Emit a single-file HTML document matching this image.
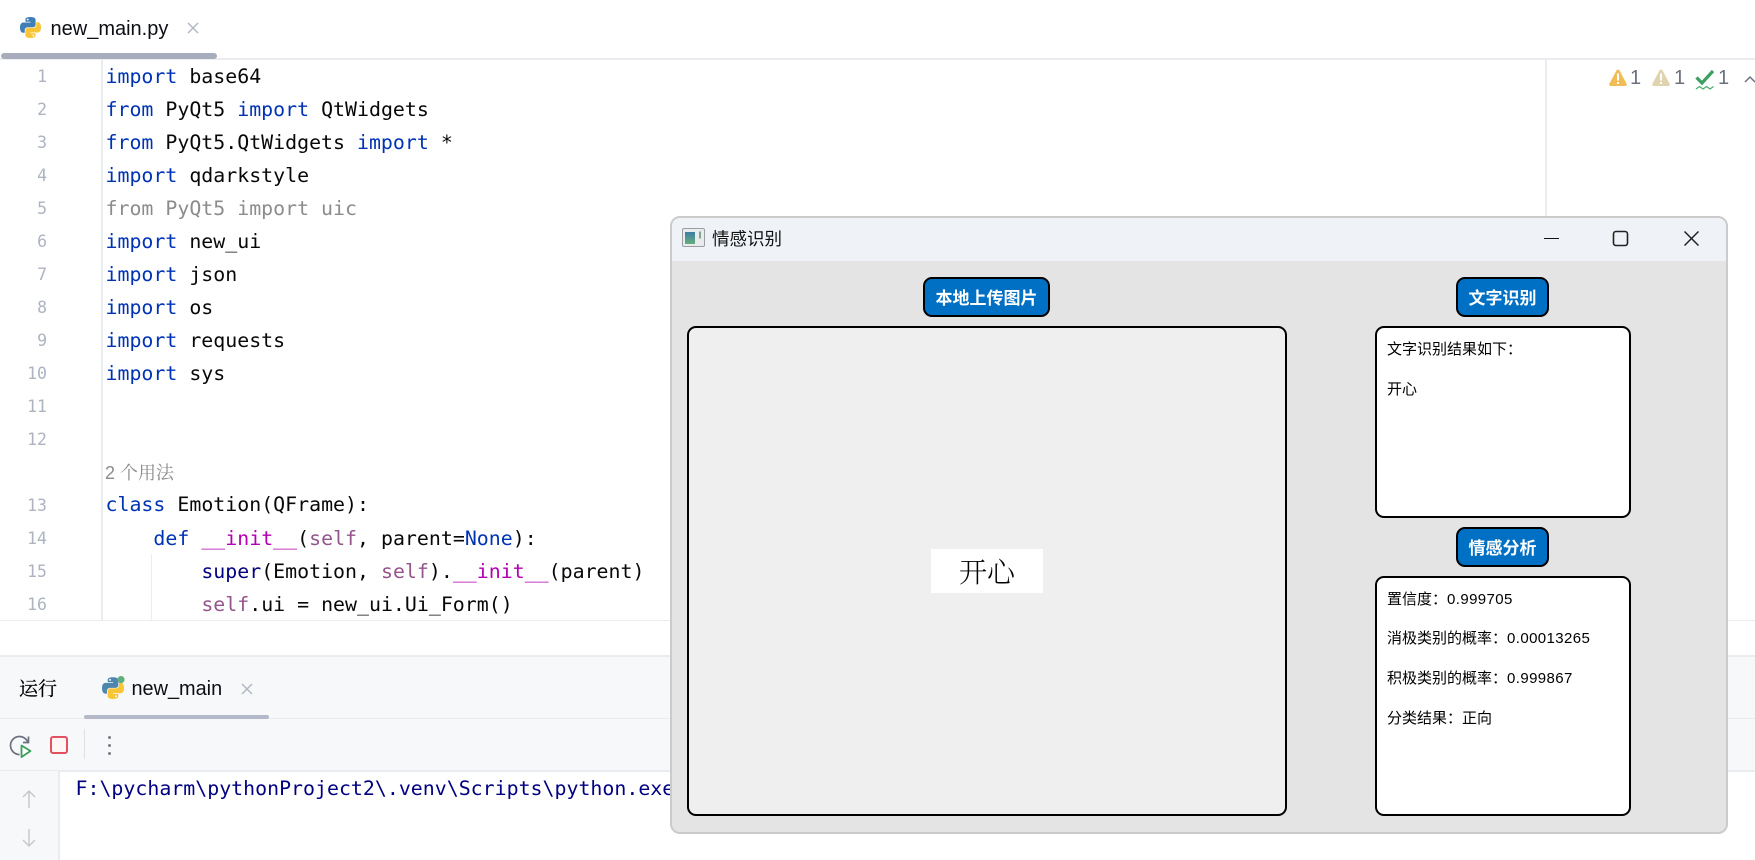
<!DOCTYPE html>
<html lang="zh">
<head>
<meta charset="utf-8">
<title>new_main.py</title>
<style>
html,body{margin:0;padding:0;background:#fff}
body{position:relative;width:1755px;height:860px;overflow:hidden;font-family:"Liberation Sans","Noto Sans CJK SC",sans-serif;color:#111}
.a{position:absolute}
#editor{position:absolute;left:0;top:60px;width:1755px;height:560px;overflow:hidden;background:#fff}
.l{position:absolute;left:105.5px;height:33px;line-height:33px;white-space:pre;font-family:"DejaVu Sans Mono","Liberation Mono",monospace;font-size:19.9px;color:#080808}
.n{position:absolute;left:0;width:47px;text-align:right;height:33px;line-height:33px;font-family:"DejaVu Sans Mono","Liberation Mono",monospace;font-size:16.5px;color:#aeb3c2}
.k{color:#0033b3}.s{color:#94558d}.d{color:#b200b2}.g{color:#8c8c8c}.b{color:#000080}
.btn{position:absolute;box-sizing:border-box;height:40px;top:277px;background:#0070c4;border:2px solid #000;border-radius:9px;color:#fff;font-weight:700;font-size:17px;text-align:center;line-height:36px;font-family:"Noto Sans CJK SC",sans-serif}
.box{position:absolute;box-sizing:border-box;background:#fff;border:2px solid #000;border-radius:9px}
.t{position:absolute;left:1387px;height:24px;line-height:24px;font-size:15px;white-space:pre;color:#000;font-family:"Liberation Sans","Noto Sans CJK SC",sans-serif}
</style>
</head>
<body>

<!-- top tab -->
<svg class="a" style="left:20px;top:17px" width="21" height="21" viewBox="0 0 110 110">
<path fill="#3f7fb5" d="M54.9 0C26.8 0 28.6 12.2 28.6 12.2l0 12.6h26.8v3.8H17.9S0 26.6 0 54.9s15.6 27.3 15.6 27.3h9.3V69s-.5-15.6 15.4-15.6h26.5s14.9.2 14.9-14.4V14.9S84 0 54.9 0zM40.2 8.5a4.8 4.8 0 1 1 0 9.6 4.8 4.8 0 0 1 0-9.6z"/>
<path fill="#f8c537" transform="rotate(180 55 55)" d="M54.9 0C26.8 0 28.6 12.2 28.6 12.2l0 12.6h26.8v3.8H17.9S0 26.6 0 54.9s15.6 27.3 15.6 27.3h9.3V69s-.5-15.6 15.4-15.6h26.5s14.9.2 14.9-14.4V14.9S84 0 54.9 0zM40.2 8.5a4.8 4.8 0 1 1 0 9.6 4.8 4.8 0 0 1 0-9.6z"/>
</svg>
<div class="a" style="left:50.5px;top:15px;height:28px;line-height:28px;font-size:20px;color:#0c0e14">new_main.py</div>
<svg class="a" style="left:187px;top:22px" width="12" height="12" viewBox="0 0 12 12"><path d="M1 1L11 11M11 1L1 11" stroke="#b4b8c4" stroke-width="1.5" fill="none"/></svg>
<div class="a" style="left:0;top:58px;width:1755px;height:2px;background:#ebecf0"></div>
<div class="a" style="left:1px;top:53px;width:216px;height:6px;background:#a7adbd;border-radius:3px"></div>

<!-- editor -->
<div id="editor">
<div class="a" style="left:101px;top:0;width:2px;height:560px;background:#ebecf0"></div>
<div class="a" style="left:150.5px;top:494px;width:1.5px;height:66px;background:#ebecf0"></div>
<div class="a" style="left:1545px;top:0;width:2px;height:560px;background:#ebecf0"></div>

<div class="n" style="top:0">1</div>
<div class="n" style="top:33px">2</div>
<div class="n" style="top:66px">3</div>
<div class="n" style="top:99px">4</div>
<div class="n" style="top:132px">5</div>
<div class="n" style="top:165px">6</div>
<div class="n" style="top:198px">7</div>
<div class="n" style="top:231px">8</div>
<div class="n" style="top:264px">9</div>
<div class="n" style="top:297px">10</div>
<div class="n" style="top:330px">11</div>
<div class="n" style="top:363px">12</div>
<div class="n" style="top:429px">13</div>
<div class="n" style="top:462px">14</div>
<div class="n" style="top:495px">15</div>
<div class="n" style="top:528px">16</div>

<div class="l" style="top:0"><span class="k">import</span> base64</div>
<div class="l" style="top:33px"><span class="k">from</span> PyQt5 <span class="k">import</span> QtWidgets</div>
<div class="l" style="top:66px"><span class="k">from</span> PyQt5.QtWidgets <span class="k">import</span> *</div>
<div class="l" style="top:99px"><span class="k">import</span> qdarkstyle</div>
<div class="l g" style="top:132px;color:#8c8c8c">from PyQt5 import uic</div>
<div class="l" style="top:165px"><span class="k">import</span> new_ui</div>
<div class="l" style="top:198px"><span class="k">import</span> json</div>
<div class="l" style="top:231px"><span class="k">import</span> os</div>
<div class="l" style="top:264px"><span class="k">import</span> requests</div>
<div class="l" style="top:297px"><span class="k">import</span> sys</div>
<div class="a" style="left:105px;top:397px;height:33px;line-height:33px;font-size:18px;color:#8c8c8c;white-space:pre;font-family:'Liberation Sans','Noto Serif CJK SC',serif">2 个用法</div>
<div class="l" style="top:428px"><span class="k">class</span> Emotion(QFrame):</div>
<div class="l" style="top:462px">    <span class="k">def</span> <span class="d">__init__</span>(<span class="s">self</span>, parent=<span class="k">None</span>):</div>
<div class="l" style="top:495px">        <span class="b">super</span>(Emotion, <span class="s">self</span>).<span class="d">__init__</span>(parent)</div>
<div class="l" style="top:528px">        <span class="s">self</span>.ui = new_ui.Ui_Form()</div>

<!-- inspection widget -->
<svg class="a" style="left:1609px;top:9px" width="18" height="18" viewBox="0 0 18 18"><path d="M9 .5c.7 0 1.200.4 1.500.9l7.100 13.300c.6 1.100-.1 2.300-1.300 2.300H1.700c-1.200 0-1.900-1.200-1.300-2.300L7.500 1.400C7.800.9 8.300.5 9 .5z" fill="#f2bc57"/><rect x="8" y="4.500" width="2" height="7" fill="#fff"/><rect x="8" y="13" width="2" height="2" fill="#fff"/></svg>
<div class="a" style="left:1630px;top:7px;font-size:20px;line-height:22px;color:#6c707e">1</div>
<svg class="a" style="left:1652px;top:9px" width="18" height="18" viewBox="0 0 18 18"><path d="M9 .5c.7 0 1.200.4 1.500.9l7.100 13.300c.6 1.100-.1 2.300-1.300 2.300H1.700c-1.200 0-1.900-1.200-1.300-2.300L7.500 1.400C7.800.9 8.300.5 9 .5z" fill="#dfd3b0"/><rect x="8" y="4.500" width="2" height="7" fill="#fff"/><rect x="8" y="13" width="2" height="2" fill="#fff"/></svg>
<div class="a" style="left:1674px;top:7px;font-size:20px;line-height:22px;color:#6c707e">1</div>
<svg class="a" style="left:1695px;top:9px" width="20" height="23" viewBox="0 0 20 23"><path d="M1.500 8.500L7 14L18 2" stroke="#3f9f62" stroke-width="3.200" fill="none"/><path d="M1 20l3.500-2.500 3.500 2.500 3.500-2.500 3.500 2.500 3.500-2.500" stroke="#4fae70" stroke-width="1.300" fill="none"/></svg>
<div class="a" style="left:1718px;top:7px;font-size:20px;line-height:22px;color:#6c707e">1</div>
<svg class="a" style="left:1744px;top:15px" width="12" height="9" viewBox="0 0 12 9"><path d="M1 7L6 2L11 7" stroke="#6c707e" stroke-width="1.500" fill="none"/></svg>
</div>
<div class="a" style="left:0;top:620px;width:1755px;height:1px;background:#ebecf0"></div>

<!-- run panel -->
<div class="a" style="left:0;top:655px;width:1755px;height:116px;background:#f7f8fa;border-top:2px solid #ebecf0;box-sizing:border-box"></div>
<div class="a" style="left:0;top:718px;width:1755px;height:1px;background:#ebecf0"></div>
<div class="a" style="left:0;top:770px;width:1755px;height:1.500px;background:#ebecf0"></div>
<div class="a" style="left:0;top:771px;width:58px;height:89px;background:#f7f8fa;border-right:2px solid #ebecf0"></div>

<div class="a" style="left:19px;top:674px;height:28px;line-height:28px;font-size:19px;color:#000;-webkit-text-stroke:.25px #000;font-family:'Noto Serif CJK SC',serif">运行</div>
<svg class="a" style="left:102px;top:676px" width="23" height="23" viewBox="0 0 115 115">
<path fill="#4f86ad" d="M54.900 6C26.800 6 28.600 18.200 28.600 18.200l0 12.600h26.800v3.800H17.900S0 32.600 0 60.900s15.600 27.300 15.600 27.300h9.300V75s-.5-15.600 15.400-15.600h26.500s14.900.2 14.900-14.400V20.900S84 6 54.900 6zM40.200 14.500a4.800 4.800 0 1 1 0 9.600 4.800 4.800 0 0 1 0-9.600z"/>
<path fill="#f8c537" transform="rotate(180 55 60)" d="M54.900 5C26.800 5 28.600 17.200 28.600 17.200l0 12.600h26.800v3.800H17.900S0 31.600 0 59.900s15.600 27.300 15.600 27.300h9.300V74s-.5-15.600 15.400-15.600h26.500s14.900.2 14.900-14.400V19.900S84 5 54.900 5zM40.200 13.500a4.800 4.800 0 1 1 0 9.600 4.800 4.800 0 0 1 0-9.600z"/>
<circle cx="95" cy="18" r="18" fill="#5fb07e"/>
</svg>
<div class="a" style="left:131.500px;top:675px;height:28px;line-height:28px;font-size:19.900px;color:#0c0e14">new_main</div>
<svg class="a" style="left:241px;top:683px" width="12" height="12" viewBox="0 0 12 12"><path d="M1 1L11 11M11 1L1 11" stroke="#b4b8c4" stroke-width="1.500" fill="none"/></svg>
<div class="a" style="left:84px;top:715px;width:185px;height:4px;background:#b3b9c9;border-radius:2px"></div>

<!-- toolbar -->
<svg class="a" style="left:9px;top:733px" width="24" height="26" viewBox="0 0 24 26">
<path d="M10.500 21.500A9 9 0 1 1 19 9.500" stroke="#6c707e" stroke-width="1.700" fill="none"/>
<path d="M14 9.500h5.500V3.500" stroke="#6c707e" stroke-width="1.700" fill="none"/>
<path d="M12.500 12.500L21.500 18L12.500 24Z" stroke="#3b9f5a" stroke-width="1.800" fill="#fff" stroke-linejoin="round"/>
</svg>
<div class="a" style="left:50px;top:736px;width:18px;height:18px;box-sizing:border-box;border:2px solid #e2515f;border-radius:3px;background:#fff5f5"></div>
<div class="a" style="left:83.500px;top:729px;width:1.500px;height:30px;background:#dfe1e5"></div>
<div class="a" style="left:107.500px;top:735.500px;width:3.500px;height:3.500px;border-radius:2px;background:#7a7e8b"></div>
<div class="a" style="left:107.500px;top:743.500px;width:3.500px;height:3.500px;border-radius:2px;background:#7a7e8b"></div>
<div class="a" style="left:107.500px;top:751.500px;width:3.500px;height:3.500px;border-radius:2px;background:#7a7e8b"></div>
<svg class="a" style="left:22px;top:789px" width="14" height="20" viewBox="0 0 14 20"><path d="M7 19V2M1 8L7 2L13 8" stroke="#c8c9cc" stroke-width="1.500" fill="none"/></svg>
<svg class="a" style="left:22px;top:828px" width="14" height="20" viewBox="0 0 14 20"><path d="M7 1V18M1 12L7 18L13 12" stroke="#c8c9cc" stroke-width="1.500" fill="none"/></svg>
<div class="l" style="left:75.500px;top:772px;color:#000080">F:\pycharm\pythonProject2\.venv\Scripts\python.exe</div>

<!-- dialog -->
<div class="a" style="left:670px;top:216px;width:1058px;height:618px;box-sizing:border-box;background:#e4e4e4;border:2px solid #cbcbcb;border-radius:10px;overflow:hidden">
  <div class="a" style="left:0;top:0;width:100%;height:43px;background:#eff3f8"></div>
</div>
<svg class="a" style="left:682px;top:228px" width="23" height="19" viewBox="0 0 23 19">
<defs><linearGradient id="g1" x1="0" y1="0" x2="0" y2="1"><stop offset="0" stop-color="#3c7fa3"/><stop offset="1" stop-color="#69ad7c"/></linearGradient></defs>
<rect x=".5" y=".5" width="22" height="18" rx="1.500" fill="#e9ebec" stroke="#9a9fa3"/>
<rect x="3" y="4" width="10" height="12" fill="url(#g1)"/>
<rect x="17" y="3.500" width="2" height="7" fill="#7fa98f"/>
</svg>
<div class="a" style="left:712px;top:227px;height:24px;line-height:24px;font-size:17.500px;color:#111;font-family:'Noto Sans CJK SC',sans-serif">情感识别</div>
<div class="a" style="left:1544px;top:238px;width:15px;height:1.200px;background:#111"></div>
<svg class="a" style="left:1612px;top:230px" width="17" height="17" viewBox="0 0 17 17"><rect x="1.500" y="1.500" width="14" height="14" rx="2.500" fill="none" stroke="#222" stroke-width="1.600"/></svg>
<svg class="a" style="left:1684px;top:231px" width="15" height="15" viewBox="0 0 15 15"><path d="M.5.500L14.500 14.500M14.500.500L.5 14.500" stroke="#222" stroke-width="1.500" fill="none"/></svg>

<div class="btn" style="left:923px;width:127px">本地上传图片</div>
<div class="box" style="left:687px;top:326px;width:600px;height:490px;background:#efefef"></div>
<div class="a" style="left:931px;top:549px;width:112px;height:44px;background:#fff;text-align:center;line-height:44px;font-size:28px;color:#000;font-family:'Noto Serif CJK SC',serif;font-weight:300">开心</div>

<div class="btn" style="left:1456px;width:93px">文字识别</div>
<div class="box" style="left:1375px;top:326px;width:256px;height:192px"></div>
<div class="t" style="top:338px">文字识别结果如下：</div>
<div class="t" style="top:378px">开心</div>

<div class="btn" style="left:1456px;top:527px;width:93px">情感分析</div>
<div class="box" style="left:1375px;top:576px;width:256px;height:240px"></div>
<div class="t" style="top:588px">置信度：<span style="letter-spacing:.4px">0.999705</span></div>
<div class="t" style="top:627px">消极类别的概率：<span style="letter-spacing:.4px">0.00013265</span></div>
<div class="t" style="top:667px">积极类别的概率：<span style="letter-spacing:.4px">0.999867</span></div>
<div class="t" style="top:707px">分类结果：正向</div>

</body>
</html>
